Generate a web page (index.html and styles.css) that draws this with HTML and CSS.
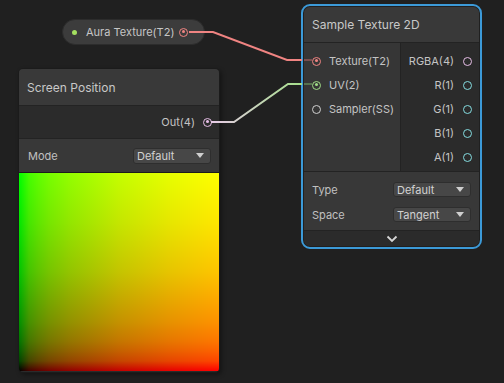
FILE: index.html
```html
<!DOCTYPE html>
<html lang="en">
<head>
  <meta charset="UTF-8">
  <title>Shader Graph</title>
  <link rel="stylesheet" href="styles.css">
</head>
<body>
  <div class="graph">

    <div class="property-pill">
      <span class="pill-dot"></span>
      <span class="pill-label">Aura Texture(T2)</span>
      <span class="port port-tex connected"></span>
    </div>

    <div class="node node-screen">
      <div class="node-title">Screen Position</div>
      <div class="out-row">
        <span class="port-label">Out(4)</span>
        <span class="port port-vec4 connected"></span>
      </div>
      <div class="control-row">
        <span class="control-label">Mode</span>
        <div class="dropdown wide"><span>Default</span><span class="caret"></span></div>
      </div>
      <div class="preview"></div>
    </div>

    <div class="node node-sample">
      <div class="node-inner">
        <div class="node-title">Sample Texture 2D</div>
        <div class="ports">
          <div class="inputs">
            <div class="port-row"><span class="port port-tex connected"></span><span class="port-label">Texture(T2)</span></div>
            <div class="port-row"><span class="port port-uv connected"></span><span class="port-label">UV(2)</span></div>
            <div class="port-row"><span class="port port-sampler"></span><span class="port-label">Sampler(SS)</span></div>
          </div>
          <div class="outputs">
            <div class="port-row"><span class="port-label">RGBA(4)</span><span class="port port-vec4"></span></div>
            <div class="port-row"><span class="port-label">R(1)</span><span class="port port-float"></span></div>
            <div class="port-row"><span class="port-label">G(1)</span><span class="port port-float"></span></div>
            <div class="port-row"><span class="port-label">B(1)</span><span class="port port-float"></span></div>
            <div class="port-row"><span class="port-label">A(1)</span><span class="port port-float"></span></div>
          </div>
        </div>
        <div class="controls">
          <div class="control-line">
            <span class="control-label">Type</span>
            <div class="dropdown"><span>Default</span><span class="caret"></span></div>
          </div>
          <div class="control-line">
            <span class="control-label">Space</span>
            <div class="dropdown"><span>Tangent</span><span class="caret"></span></div>
          </div>
        </div>
        <div class="collapse">
          <svg width="12" height="8" viewBox="0 0 12 8"><path d="M1.5 1.5 L6 6 L10.5 1.5" fill="none" stroke="#d6d6d6" stroke-width="1.8"/></svg>
        </div>
      </div>
    </div>

    <svg class="wires" width="504" height="383" viewBox="0 0 504 383">
      <defs>
        <linearGradient id="uvWire" x1="211" y1="0" x2="300" y2="0" gradientUnits="userSpaceOnUse">
          <stop offset="0" stop-color="#e8cbe8"/>
          <stop offset="1" stop-color="#a6de8c"/>
        </linearGradient>
      </defs>
      <path d="M189 32 H213 L287 60 H302" fill="none" stroke="#f08482" stroke-width="2"/>
      <path d="M304 60 H312" stroke="#7a4f4f" stroke-width="2"/>
      <path d="M211 122 H234 L288 84 H302" fill="none" stroke="url(#uvWire)" stroke-width="2"/>
      <path d="M304 84 H312" stroke="#56724f" stroke-width="2"/>
    </svg>

  </div>
</body>
</html>
```

FILE: styles.css
```css
* {
  margin: 0;
  padding: 0;
  box-sizing: border-box;
}

body {
  background: #202020;
  font-family: Inter, "Noto Sans", sans-serif;
  font-size: 11px;
  color: #c4c4c4;
  overflow: hidden;
}

.graph {
  position: relative;
  width: 504px;
  height: 383px;
}

/* ports */
.port {
  position: relative;
  display: inline-block;
  width: 9px;
  height: 9px;
  border-radius: 50%;
  border: 1.5px solid #c8c8c8;
  flex: none;
}

.port.connected::after {
  content: "";
  position: absolute;
  left: 1.5px;
  top: 1.5px;
  width: 3px;
  height: 3px;
  border-radius: 50%;
  background: currentColor;
}

.port-tex { border-color: #f08482; color: #f08482; }
.port-uv { border-color: #9fdc86; color: #9fdc86; }
.port-sampler { border-color: #d0d0d0; }
.port-vec4 { border-color: #e6bde6; color: #e6bde6; }
.port-float { border-color: #84dce0; }

/* property pill */
.property-pill {
  position: absolute;
  left: 62px;
  top: 19px;
  width: 143px;
  height: 26px;
  display: flex;
  align-items: center;
  padding: 0 16px 0 9px;
  border-radius: 13px;
  background: #3c3c3c;
  border: 1px solid #2c2c2c;
}

.pill-dot {
  width: 5px;
  height: 5px;
  border-radius: 50%;
  background: #a4e060;
  flex: none;
}

.pill-label {
  margin-left: 9px;
  flex: 1;
  color: #c6c6c6;
}

/* nodes */
.node {
  position: absolute;
}

.node-title {
  display: flex;
  align-items: center;
  background: #393939;
  font-size: 12px;
  color: #c8c8c8;
  border-bottom: 1px solid #232323;
}

.node-screen {
  left: 18px;
  top: 68px;
  width: 202px;
  height: 305px;
  border: 1px solid #1b1b1b;
  border-radius: 5px;
  overflow: hidden;
  background: #2b2b2b;
  box-shadow: 2px 2px 4px rgba(0,0,0,0.35);
}

.node-screen .node-title {
  height: 37px;
  padding-left: 8px;
}

.out-row {
  height: 33px;
  display: flex;
  align-items: center;
  justify-content: flex-end;
  gap: 8px;
  padding-right: 7px;
  background: #2b2b2b;
  border-bottom: 1px solid #232323;
}

.control-row {
  height: 33px;
  display: flex;
  align-items: center;
  justify-content: space-between;
  padding: 0 8px 0 9px;
  background: #383838;
}

.preview {
  height: 199px;
  background:
    linear-gradient(to right, #000 0%, #450000 5%, #600000 10%, #760000 15%, #920000 25%, #c40000 50%, #e60000 75%, #ff0000 100%),
    linear-gradient(to top, #000 0%, #004500 5%, #006000 10%, #007600 15%, #009200 25%, #00c400 50%, #00e600 75%, #00ff00 100%);
  background-blend-mode: screen;
  border-top: 1px solid #1c1c1c;
}

.node-sample {
  left: 301px;
  top: 4px;
  width: 181px;
  height: 245px;
  border: 2px solid #3c9ad8;
  border-radius: 9px;
  padding: 1px;
  background: #202020;
}

.node-inner {
  height: 100%;
  border-radius: 6px;
  overflow: hidden;
  background: #2b2b2b;
  display: flex;
  flex-direction: column;
}

.node-sample .node-title {
  height: 36px;
  padding-left: 8px;
}

.ports {
  display: flex;
  height: 129px;
  border-bottom: 1px solid #232323;
}

.inputs {
  width: 97px;
  background: #363636;
  border-right: 1px solid #232323;
  padding-top: 6px;
}

.outputs {
  flex: 1;
  padding-top: 6px;
}

.port-row {
  height: 24px;
  display: flex;
  align-items: center;
  gap: 8px;
}

.inputs .port-row {
  padding-left: 8px;
}

.outputs .port-row {
  justify-content: flex-end;
  padding-right: 7px;
  gap: 9px;
}

.controls {
  height: 59px;
  background: #383838;
  padding: 5px 8px 0 8px;
  border-bottom: 1px solid #232323;
}

.control-line {
  height: 25px;
  display: flex;
  align-items: center;
  justify-content: space-between;
}

.control-label {
  color: #c0c0c0;
}

.dropdown {
  width: 78px;
  height: 15px;
  display: flex;
  align-items: center;
  justify-content: space-between;
  padding: 0 6px 0 3px;
  background: #474747;
  border: 1px solid #2e2e2e;
  border-radius: 3px;
  font-size: 11px;
  color: #d2d2d2;
}

.dropdown.wide {
  width: 78px;
  height: 16px;
}

.caret {
  width: 0;
  height: 0;
  border-left: 4px solid transparent;
  border-right: 4px solid transparent;
  border-top: 5px solid #cfcfcf;
}

.collapse {
  flex: 1;
  display: flex;
  justify-content: center;
  align-items: center;
  background: #2b2b2b;
}

.wires {
  position: absolute;
  left: 0;
  top: 0;
  pointer-events: none;
}
```
